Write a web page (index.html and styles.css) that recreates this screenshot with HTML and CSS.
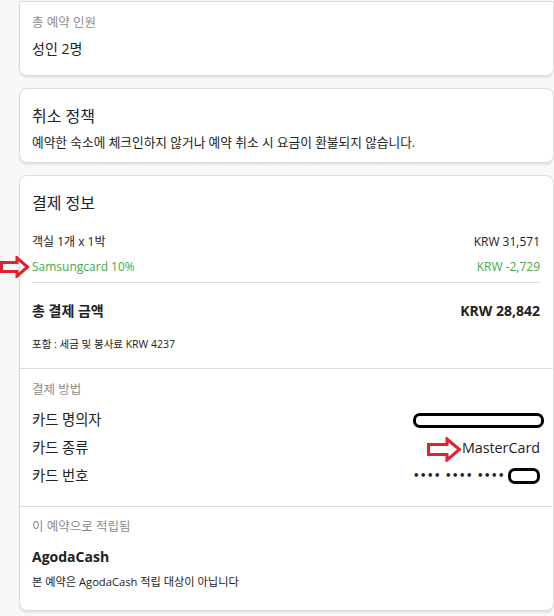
FILE: index.html
```html
<!DOCTYPE html>
<html lang="ko">
<head>
    <meta charset="UTF-8">
    <meta name="viewport" content="width=device-width, initial-scale=1.0">
    <title>예약 정보</title>
    <link rel="stylesheet" href="styles.css">
</head>
<body>
    <div class="page">
        <!-- 예약 인원 -->
        <div class="card card-top">
            <div class="guests">
                <div class="label">총 예약 인원</div>
                <div class="value">성인 2명</div>
            </div>
        </div>

        <!-- 취소 정책 -->
        <div class="card">
            <div class="policy">
                <div class="title">취소 정책</div>
                <div class="policy-text">예약한 숙소에 체크인하지 않거나 예약 취소 시 요금이 환불되지 않습니다.</div>
            </div>
        </div>

        <!-- 결제 정보 -->
        <div class="card">
            <div class="section price">
                <div class="title">결제 정보</div>
                <div class="row room">
                    <span>객실 1개 x 1박</span>
                    <span class="amount">KRW 31,571</span>
                </div>
                <div class="row discount">
                    <svg class="mark-left" width="30" height="22" viewBox="0 0 30 22">
                        <path d="M1.5 6.5 H17 V1.8 L27.5 11 L17 20.2 V15.5 H1.5 Z" fill="none" stroke="#e3202b" stroke-width="3" stroke-linejoin="miter"/>
                    </svg>
                    <span>Samsungcard 10%</span>
                    <span class="amount">KRW -2,729</span>
                </div>
                <div class="line"></div>
                <div class="row total">
                    <span>총 결제 금액</span>
                    <span class="amount">KRW 28,842</span>
                </div>
                <div class="tax">포함 : 세금 및 봉사료 KRW 4237</div>
            </div>

            <div class="section method">
                <div class="label">결제 방법</div>
                <div class="row card-row">
                    <span>카드 명의자</span>
                    <span class="redact redact-name"></span>
                </div>
                <div class="row card-row">
                    <span>카드 종류</span>
                    <span class="card-type">
                        <svg class="mark" width="35" height="25" viewBox="0 0 35 25">
                            <path d="M1.5 7.5 H20 V2 L32.5 12.5 L20 23 V17.5 H1.5 Z" fill="none" stroke="#e3202b" stroke-width="3"/>
                        </svg>MasterCard</span>
                </div>
                <div class="row card-row">
                    <span>카드 번호</span>
                    <span class="card-number"><span class="dots">•••• •••• ••••</span><span class="redact redact-num"></span></span>
                </div>
            </div>

            <div class="section cash">
                <div class="label">이 예약으로 적립됨</div>
                <div class="cash-title">AgodaCash</div>
                <div class="cash-note">본 예약은 AgodaCash 적립 대상이 아닙니다</div>
            </div>
        </div>
    </div>
</body>
</html>
```

FILE: styles.css
```css
body {
    font-family: "Open Sans", "Noto Sans CJK KR", sans-serif;
    margin: 0;
    padding: 0;
    background-color: #f8f8f8;
    color: #222;
}
.page {
    padding: 1px 0 0 19px;
}
.card {
    background-color: #fff;
    border: 1px solid #dcdcdc;
    border-radius: 8px;
    box-shadow: 0 2px 2px rgba(0, 0, 0, 0.08);
    margin-bottom: 12px;
}
.card-top {
    border-radius: 0 0 8px 8px;
}
.label {
    font-size: 12.5px;
    line-height: 18px;
    color: #8c8c8c;
}
.title {
    font-size: 16px;
    line-height: 24px;
}
.row {
    display: flex;
    justify-content: space-between;
    align-items: center;
    position: relative;
}
.amount {
    text-align: right;
}

/* 예약 인원 */
.guests {
    padding: 12px 13px 16px 12px;
}
.guests .value {
    font-size: 14px;
    line-height: 20px;
    margin-top: 7px;
}

/* 취소 정책 */
.policy {
    padding: 15px 13px 11px 12px;
}
.policy-text {
    font-size: 12.7px;
    line-height: 18px;
    margin-top: 5px;
}

/* 결제 정보 */
.section {
    padding: 0 13px 0 12px;
}
.section + .section {
    border-top: 1px solid #dcdcdc;
}
.price {
    padding-top: 15px;
    padding-bottom: 16px;
}
.room {
    font-size: 12px;
    line-height: 20px;
    margin-top: 17px;
}
.discount {
    font-size: 12px;
    line-height: 20px;
    margin-top: 5px;
    color: #46a94a;
}
.mark-left {
    position: absolute;
    left: -32px;
    top: -1px;
}
.line {
    height: 1px;
    background-color: #dcdcdc;
    margin-top: 5px;
}
.total {
    font-size: 14px;
    line-height: 22px;
    font-weight: 700;
    margin-top: 17px;
}
.tax {
    font-size: 10.5px;
    line-height: 16px;
    margin-top: 14px;
}

/* 결제 방법 */
.method {
    padding-top: 12px;
    padding-bottom: 20px;
}
.card-row {
    font-size: 14.3px;
    line-height: 20px;
    height: 20px;
    margin-top: 8px;
}
.method .label + .card-row {
    margin-top: 11px;
}
.card-type {
    display: flex;
    align-items: center;
}
.card-type .mark {
    margin-top: 2px;
}
.card-number {
    display: flex;
    align-items: center;
}
.dots {
    font-family: "DejaVu Sans", sans-serif;
    font-size: 10px;
    font-weight: 700;
    letter-spacing: 0.6px;
    margin-right: 3px;
}
.redact {
    display: inline-block;
    box-sizing: border-box;
    border: 3px solid #000;
    border-radius: 7px;
    background-color: #fff;
    flex-shrink: 0;
}
.redact-name {
    width: 131px;
    height: 15px;
    margin-right: -4px;
}
.redact-num {
    width: 32px;
    height: 16px;
}

/* 적립 */
.cash {
    padding-top: 11px;
    padding-bottom: 19px;
}
.cash-title {
    font-size: 14px;
    line-height: 20px;
    font-weight: 700;
    margin-top: 11px;
}
.cash-note {
    font-size: 11.2px;
    line-height: 18px;
    margin-top: 6px;
}
```
